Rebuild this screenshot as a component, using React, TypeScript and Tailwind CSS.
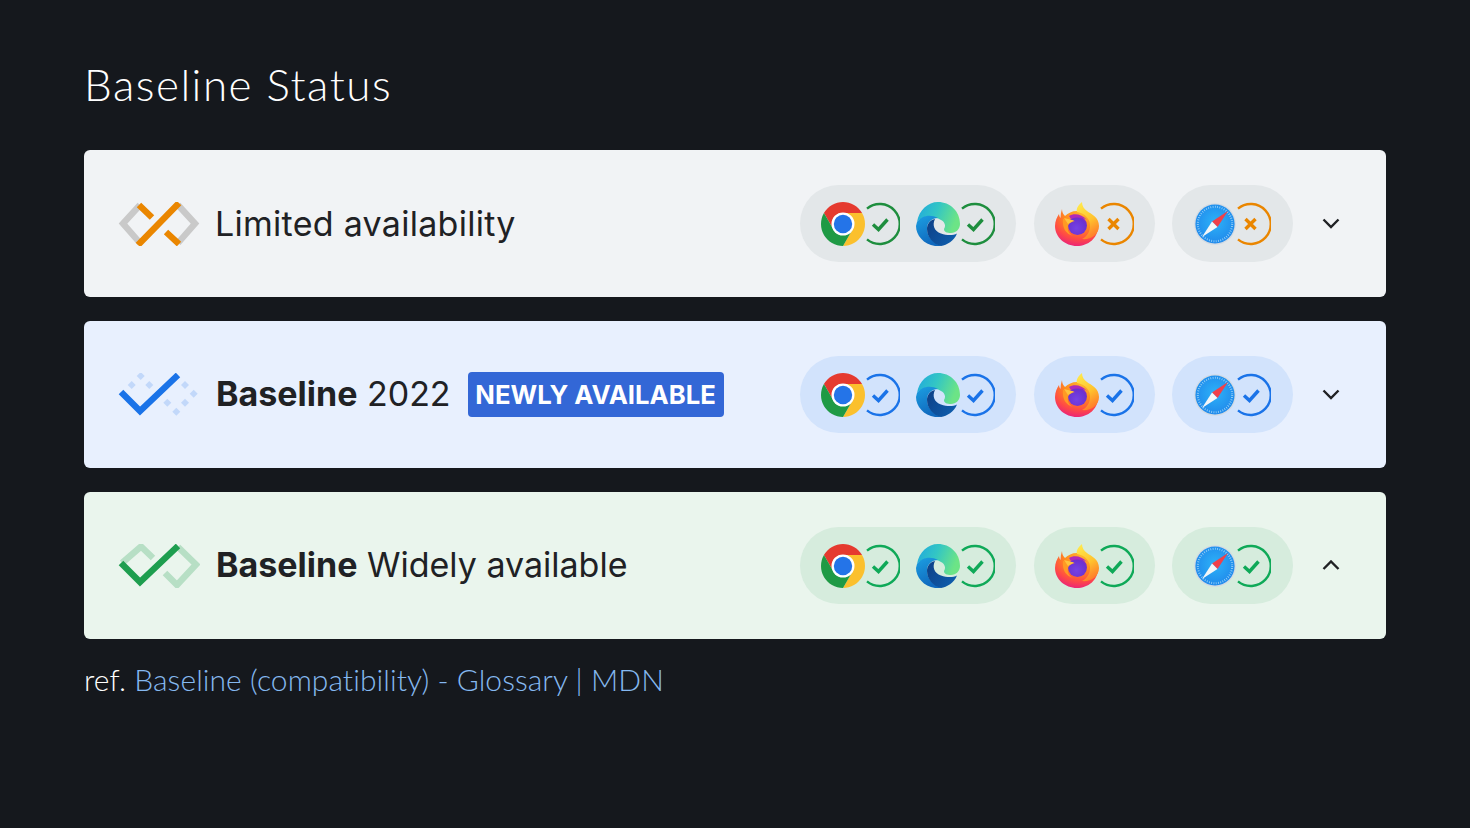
const Chrome = () => (
  <svg width="44" height="44" viewBox="0 0 44 44" className="shrink-0 relative">
    <path d="M22 11H41.05A22 22 0 0 0 2.95 11L12.47 27.5A11 11 0 0 1 22 11Z" fill="#e53a2f" />
    <path d="M41.05 11A22 22 0 0 1 22 44L31.53 27.5A11 11 0 0 0 22 11Z" fill="#fbc02d" />
    <path d="M2.95 11A22 22 0 0 0 22 44L31.53 27.5A11 11 0 0 1 12.47 27.5Z" fill="#1f9a45" />
    <circle cx="22" cy="22" r="11.5" fill="#fff" />
    <circle cx="22" cy="22" r="9.2" fill="#2474e8" />
  </svg>
);

const Edge = () => (
  <svg width="44" height="44" viewBox="0 0 44 44" className="shrink-0 relative">
    <defs>
      <linearGradient id="edgeTop" x1="0" y1="0" x2="1" y2="0.3">
        <stop offset="0" stopColor="#1fa7e0" />
        <stop offset="0.5" stopColor="#33c6c4" />
        <stop offset="1" stopColor="#6ce486" />
      </linearGradient>
      <linearGradient id="edgeBody" x1="0" y1="0" x2="0.4" y2="1">
        <stop offset="0" stopColor="#1c9fe2" />
        <stop offset="1" stopColor="#0f68bd" />
      </linearGradient>
      <linearGradient id="edgeDark" x1="0" y1="0" x2="1" y2="0.6">
        <stop offset="0" stopColor="#0d3f86" />
        <stop offset="1" stopColor="#0e5cab" />
      </linearGradient>
    </defs>
    <path d="M1 20C3 8 12 0 22 0C34 0 44 9 44 22C44 27 40 31 35 31C31 31 28 30 28 27C30 24 29 20 25 18C16 13 5 15 1 20Z" fill="url(#edgeTop)" />
    <path d="M1 20C6 13 15 12 22 16C16 16 11 20 11 27C11 34 17 41 26 44C11 46 0 35 0 24Z" fill="url(#edgeBody)" />
    <path d="M19 17C16 23 18 29 25 31.5C31 33.5 37 33.5 41 31.5C38 39 31 43 25 44C17 42 11 35 11 27C11 22 14 18 19 17Z" fill="url(#edgeDark)" />
  </svg>
);

const Firefox = () => (
  <svg width="44" height="44" viewBox="0 0 44 44" className="shrink-0 relative">
    <defs>
      <radialGradient id="foxBody" cx="0.6" cy="0.15" r="0.95">
        <stop offset="0" stopColor="#ffb52e" />
        <stop offset="0.4" stopColor="#ff8a1e" />
        <stop offset="0.7" stopColor="#ff4a45" />
        <stop offset="1" stopColor="#e3158c" />
      </radialGradient>
      <linearGradient id="foxFlame" x1="0.2" y1="0" x2="0.6" y2="1">
        <stop offset="0" stopColor="#ffe94d" />
        <stop offset="0.55" stopColor="#ffc32e" />
        <stop offset="1" stopColor="#ff7a2a" />
      </linearGradient>
      <radialGradient id="foxGlobe" cx="0.45" cy="0.65" r="0.7">
        <stop offset="0" stopColor="#7542e5" />
        <stop offset="0.75" stopColor="#6b31cf" />
        <stop offset="1" stopColor="#a524b8" />
      </radialGradient>
    </defs>
    <path d="M7 7C7 10 8 12 10 14C13 11 17 9 22 9C33 9 43 14 43 25C43 36 33 44 22 44C10 44 0 35 0 24C0 19 2 15 4 12C4 14 5 15 5.5 16C5.5 13 6 10 7 7Z" fill="url(#foxBody)" />
    <circle cx="22.5" cy="23.5" r="9.5" fill="url(#foxGlobe)" />
    <path d="M14 14C19 11 27 12 32 18C27 15 21 15 16 17Z" fill="#b02ab8" />
    <path d="M27 0C23 3 21 7 22 10C30 11 36 18 35 25C34.5 31 31 35 27 37C35 38 44 33 44 24C44 15 36 12 32 9C29 7 27 4 27 0Z" fill="url(#foxFlame)" />
    <path d="M8 17L20 19C16 20 14 21 13 24C12 28 14 32 18 34C11 32 7 26 8 17Z" fill="#ff9a24" />
    <path d="M9 16L19 18.5L13 22Z" fill="#ffc23c" />
  </svg>
);

const Safari = () => (
  <svg width="42" height="42" viewBox="0 0 42 42" className="shrink-0 relative ml-px">
    <defs>
      <radialGradient id="safariBg" cx="0.5" cy="0.45" r="0.6">
        <stop offset="0" stopColor="#2db2f8" />
        <stop offset="1" stopColor="#1f86ea" />
      </radialGradient>
    </defs>
    <circle cx="21" cy="21" r="20.8" fill="#d3dae2" />
    <circle cx="21" cy="21" r="19.6" fill="url(#safariBg)" />
    <circle cx="21" cy="21" r="17.2" fill="none" stroke="#a9daf9" strokeWidth="2" strokeDasharray="0.7 1.6" />
    <path d="M34 8L18 18.5L23.5 24Z" fill="#f0404a" />
    <path d="M8 34L18 18.5L23.5 24Z" fill="#f4f6f8" />
  </svg>
);

const Status = ({ kind, color }: { kind: "check" | "cross"; color: string }) => (
  <svg width="42" height="44" viewBox="0 0 42 44" fill="none" className="shrink-0 -ml-[7px]" stroke={color}>
    <path d="M9 6.6A20 20 0 1 1 9 37.4" strokeWidth="2.4" />
    {kind === "check" ? (
      <path d="M15 22.5L20.5 27.5L29.5 17.5" strokeWidth="3.4" />
    ) : (
      <path d="M16.5 17L26.5 27M26.5 17L16.5 27" strokeWidth="3.4" />
    )}
  </svg>
);

const Item = ({ icon, kind, color }: { icon: React.ReactNode; kind: "check" | "cross"; color: string }) => (
  <div className="flex items-center w-[79px]">
    {icon}
    <Status kind={kind} color={color} />
  </div>
);

const LimitedLogo = () => (
  <svg width="82" height="44" viewBox="0 0 82 44" fill="none" strokeWidth="6.4" className="shrink-0">
    <path d="M22 3L5 21.5L22 41M60 3L77 21.5L60 41" stroke="#c9c9c9" />
    <path d="M20 43L61 1M21 3L34 15.5M48 30L61 42" stroke="#ea8600" />
  </svg>
);

const NewlyLogo = () => (
  <svg width="82" height="44" viewBox="0 0 82 44" fill="none" className="shrink-0">
    <g fill="#c2d8fa">
      <path d="M22.7 -1L26.7 3L22.7 7L18.7 3Z" />
      <path d="M13.7 8L17.7 12L13.7 16L9.7 12Z" />
      <path d="M31.3 8L35.3 12L31.3 16L27.3 12Z" />
      <path d="M67 8L71 12L67 16L63 12Z" />
      <path d="M75.7 16.7L79.7 20.7L75.7 24.7L71.7 20.7Z" />
      <path d="M67 25.7L71 29.7L67 33.7L63 29.7Z" />
      <path d="M58.3 34.7L62.3 38.7L58.3 42.7L54.3 38.7Z" />
      <path d="M49.3 25.7L53.3 29.7L49.3 33.7L45.3 29.7Z" />
    </g>
    <path d="M3 19L22 38L60 2" stroke="#1a73e8" strokeWidth="6.4" />
  </svg>
);

const WidelyLogo = () => (
  <svg width="82" height="44" viewBox="0 0 82 44" fill="none" strokeWidth="6.4" className="shrink-0">
    <path d="M4 19L23 2.5L35 14M60 3L78 20.5L59 41L47 29" stroke="#b7dfc5" />
    <path d="M3 19L22 38L60 2" stroke="#1e9e4f" />
  </svg>
);

const rows = [
  {
    bg: "bg-[#f1f3f5]",
    pill: "bg-[#e3e7e9]",
    logo: <LimitedLogo />,
    title: <span className="-ml-px tracking-[0.28px]">Limited availability</span>,
    chev: "M1.5 1.5L9 9L16.5 1.5",
    items: [
      ["check", "#1e8e3e"],
      ["check", "#1e8e3e"],
      ["cross", "#ea8600"],
      ["cross", "#ea8600"],
    ],
  },
  {
    bg: "bg-[#e8f0fe]",
    pill: "bg-[#d2e3fc]",
    logo: <NewlyLogo />,
    title: (
      <>
        <span className="pb-[2px]">
          <span className="font-bold">Baseline</span> 2022
        </span>
        <span className="ml-[17px] w-[256px] h-[45px] text-center rounded-[4px] bg-[#3367d6] text-white font-bold text-[25.7px] leading-[45px]">
          NEWLY AVAILABLE
        </span>
      </>
    ),
    chev: "M1.5 1.5L9 9L16.5 1.5",
    items: [
      ["check", "#1a73e8"],
      ["check", "#1a73e8"],
      ["check", "#1a73e8"],
      ["check", "#1a73e8"],
    ],
  },
  {
    bg: "bg-[#eaf5ed]",
    pill: "bg-[#d6ecdd]",
    logo: <WidelyLogo />,
    title: (
      <span className="pb-[2px]">
        <span className="font-bold">Baseline</span> Widely available
      </span>
    ),
    chev: "M1.5 9L9 1.5L16.5 9",
    items: [
      ["check", "#0fa958"],
      ["check", "#0fa958"],
      ["check", "#0fa958"],
      ["check", "#0fa958"],
    ],
  },
] as const;

export default function App() {
  return (
    <div className="min-h-screen bg-[#15181d] px-[84px] pt-[56px] font-['Lato',sans-serif]">
      <h1 className="text-[44px] leading-[56px] font-light text-white tracking-[1.5px] mb-[38px]">Baseline Status</h1>

      <div className="flex flex-col gap-6">
        {rows.map((row, i) => (
          <div key={i} className={`flex items-center h-[147px] rounded-md pl-[34px] pr-[17px] ${row.bg}`}>
            {row.logo}
            <div className="ml-4 flex items-center whitespace-pre font-['Inter',sans-serif] text-[34px] text-[#202124]">
              {row.title}
            </div>

            <div className="ml-auto flex items-center gap-[17.5px]">
              <div className={`flex items-center gap-[16px] h-[77px] w-[216px] pl-[21px] rounded-full ${row.pill}`}>
                <Item icon={<Chrome />} kind={row.items[0][0]} color={row.items[0][1]} />
                <Item icon={<Edge />} kind={row.items[1][0]} color={row.items[1][1]} />
              </div>
              <div className={`flex items-center h-[77px] w-[121px] pl-[21px] rounded-full ${row.pill}`}>
                <Item icon={<Firefox />} kind={row.items[2][0]} color={row.items[2][1]} />
              </div>
              <div className={`flex items-center h-[77px] w-[121px] pl-[21px] rounded-full ${row.pill}`}>
                <Item icon={<Safari />} kind={row.items[3][0]} color={row.items[3][1]} />
              </div>
              <div className="flex justify-center w-[76px] -ml-[17.5px]">
                <svg width="18" height="11" viewBox="0 0 18 11" fill="none" stroke="#202124" strokeWidth="2.4">
                  <path d={row.chev} />
                </svg>
              </div>
            </div>
          </div>
        ))}
      </div>

      <p className="mt-[20px] text-[30px] leading-[40px] font-light text-white tracking-[0.06px]">
        ref. <a className="text-[#85b8f0]">Baseline (compatibility) - Glossary | MDN</a>
      </p>
    </div>
  );
}
